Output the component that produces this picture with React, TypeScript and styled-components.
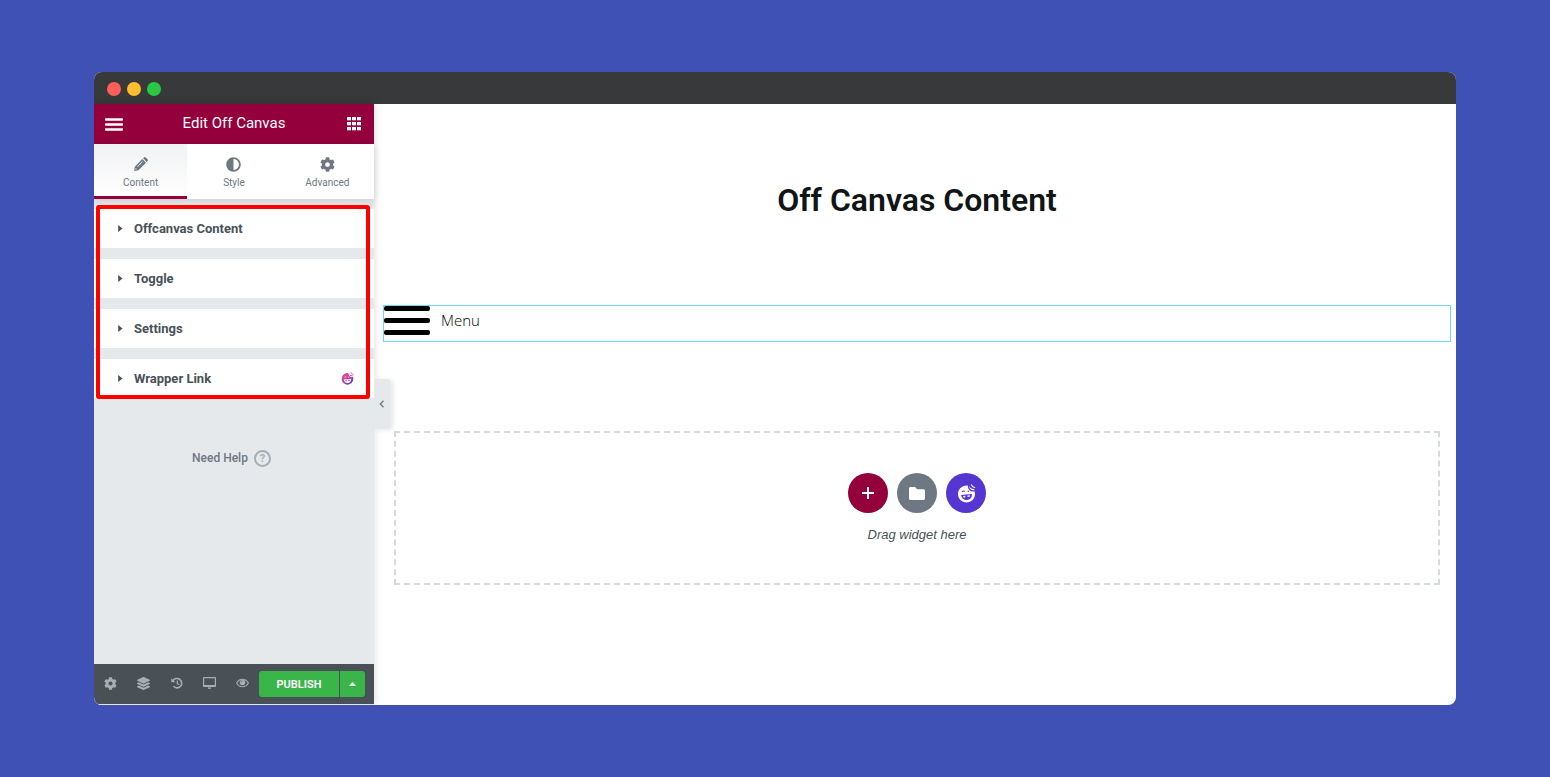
import React from "react";
import styled, { createGlobalStyle } from "styled-components";
import { FaAdjust, FaCog, FaLayerGroup } from "react-icons/fa";

const GlobalStyle = createGlobalStyle`
  * { box-sizing: border-box; }
  body { margin: 0; background: #3f51b5; font-family: Roboto, "Liberation Sans", sans-serif; }
  button { font-family: inherit; border: 0; padding: 0; margin: 0; background: none; cursor: pointer; color: inherit; }
  h1, h2, p { margin: 0; }
  svg { display: block; flex: none; }
`;

const Page = styled.div`
  min-height: 100vh;
  padding: 72px 94px;
  display: flex;
  flex-direction: column;
`;

const BrowserWindow = styled.div`
  flex: 1;
  display: flex;
  flex-direction: column;
  background: #fff;
  border-radius: 8px;
  overflow: hidden;
`;

const TitleBar = styled.div`
  display: flex;
  align-items: center;
  gap: 6px;
  height: 32px;
  padding: 2px 13px 0;
  background: #38393a;
`;

const Light = styled.span<{ $color: string }>`
  width: 14px;
  height: 14px;
  border-radius: 50%;
  background: ${(p) => p.$color};
`;

const Workspace = styled.div`
  flex: 1;
  display: flex;
`;

const Panel = styled.aside`
  position: relative;
  z-index: 1;
  flex: none;
  width: 280px;
  display: flex;
  flex-direction: column;
  background: #e6e9ec;
  border-bottom: 1px solid #e6e9ec;
  box-shadow: 0 0 8px rgba(0, 0, 0, 0.15);
`;

const PanelHeader = styled.header`
  display: flex;
  align-items: center;
  justify-content: space-between;
  height: 40px;
  padding: 0 13px 0 11px;
  background: #93003c;
  color: #fff;
`;

const PanelTitle = styled.h2`
  flex: 1;
  padding: 0 2px 2px 0;
  text-align: center;
  font-size: 15px;
  line-height: 20px;
  font-weight: 400;
`;

const Tabs = styled.div`
  display: grid;
  grid-template-columns: repeat(3, 1fr);
  height: 55px;
  background: #fff;
  box-shadow: 0 2px 8px rgba(0, 0, 0, 0.12);
`;

const Tab = styled.button<{ $active?: boolean }>`
  display: grid;
  grid-template-rows: 16px 12px;
  align-content: start;
  place-items: center;
  gap: 5px;
  padding-top: 12px;
  font-size: 10px;
  line-height: 12px;
  color: #6d7882;
  border-bottom: 3px solid ${(p) => (p.$active ? "#93003c" : "transparent")};
  background: ${(p) => (p.$active ? "linear-gradient(#f1f2f4, #fff)" : "#fff")};
`;

const Sections = styled.div`
  position: relative;
  display: flex;
  flex-direction: column;
  gap: 11px;
  padding-top: 10px;
`;

const SectionToggle = styled.button`
  display: flex;
  align-items: center;
  gap: 11px;
  height: 39px;
  padding: 0 20px 0 24px;
  background: #fff;
  color: #495157;
  font-size: 13px;
  font-weight: 700;
  text-align: left;

  span {
    flex: 1;
  }
`;

const Highlight = styled.div`
  position: absolute;
  inset: 6px 4px -1px 2px;
  border: 4px solid #f00;
  border-radius: 3px;
  pointer-events: none;
`;

const Help = styled.a`
  display: flex;
  align-items: center;
  align-self: center;
  gap: 6px;
  margin: 50px 5px 0 0;
  color: #6d7882;
  font-size: 12px;
  line-height: 20px;
  font-weight: 500;
  text-decoration: none;
`;

const HelpMark = styled.span`
  display: grid;
  place-items: center;
  width: 17px;
  height: 17px;
  border: 2px solid #a4afb7;
  border-radius: 50%;
  color: #a4afb7;
  font-size: 11px;
  line-height: 13px;
  font-weight: 700;
`;

const PanelFooter = styled.footer`
  display: flex;
  align-items: center;
  height: 40px;
  margin-top: auto;
  padding-right: 9px;
  background: #495157;
`;

const Tool = styled.button`
  display: grid;
  place-items: center;
  width: 33px;
  height: 40px;
  padding-bottom: 2px;
  color: #a4afb7;
`;

const PublishGroup = styled.div`
  display: flex;
  flex: 1;
  gap: 1px;
  height: 26px;
  border-radius: 3px;
  overflow: hidden;
  color: #fff;
`;

const Publish = styled.button`
  flex: 1;
  background: #39b54a;
  font-size: 11px;
  font-weight: 600;
`;

const PublishMore = styled.button`
  display: grid;
  place-items: center;
  width: 25px;
  background: #39b54a;
`;

const Collapse = styled.button`
  position: absolute;
  left: 100%;
  top: 275px;
  display: grid;
  place-items: center;
  width: 16px;
  height: 50px;
  border-radius: 0 3px 3px 0;
  background: #e6e9ec;
  color: #6d7882;
  box-shadow: 3px 1px 5px rgba(0, 0, 0, 0.1);
`;

const Canvas = styled.main`
  flex: 1;
  padding: 76px 5px 0 9px;
`;

const Heading = styled.h1`
  text-align: center;
  font-size: 32px;
  line-height: 40px;
  font-weight: 600;
  color: #111516;
`;

const Widget = styled.div`
  height: 37px;
  margin-top: 85px;
  border: 1px solid #71d7f7;
`;

const MenuButton = styled.button`
  display: flex;
  align-items: flex-start;
  gap: 11px;
  font-family: "Open Sans", sans-serif;
  font-size: 15px;
  line-height: 28px;
  font-weight: 300;
  color: #000;
`;

const DropZone = styled.section`
  display: flex;
  flex-direction: column;
  align-items: center;
  height: 154px;
  margin: 89px 11px 0;
  padding-top: 40px;
  border: 2px dashed #d5dadf;
`;

const Actions = styled.div`
  display: flex;
  gap: 9px;
`;

const RoundButton = styled.button<{ $color: string }>`
  display: grid;
  place-items: center;
  width: 40px;
  height: 40px;
  border-radius: 50%;
  color: #fff;
  background: ${(p) => p.$color};
`;

const Hint = styled.p`
  margin-top: 13px;
  font-family: "Liberation Sans", sans-serif;
  font-size: 13px;
  line-height: 18px;
  font-style: italic;
  color: #495157;
`;

function Face({ size, fill, detail }: { size: number; fill: string; detail: string }) {
  return (
    <svg width={size} height={size} viewBox="0 0 18 19" aria-hidden="true">
      <defs>
        <linearGradient id="face-gradient" gradientUnits="userSpaceOnUse" x1="2" y1="2" x2="16" y2="17">
          <stop offset="0.2" stopColor="#e2498a" />
          <stop offset="1" stopColor="#6a35d0" />
        </linearGradient>
      </defs>
      <path
        fill={fill}
        d="M10.300 1.500C5 .8.500 4.800.500 10c0 4.800 3.700 8.500 8.500 8.500s8.500-3.700 8.500-8.500c0-1-.1-1.800-.4-2.600-3.500 1-6.800-1.500-6.800-5.900z"
      />
      <path fill={fill} d="M11.300 1.800c.4 3.200 2.800 5.100 5.900 4.400-.2-.4-.5-.8-.8-1.100-2.200 0-3.900-1.100-5.100-3.300z" />
      <path fill="none" stroke={fill} strokeWidth="1.100" strokeLinecap="round" d="M14 .8c.4 1.500 1.500 2.500 3.200 2.700" />
      <path fill={detail} d="M3.500 10.900l10.900-1c.3 3-1.600 5.700-4.700 6-3.200.3-5.600-1.800-6.200-5z" />
      <path fill={fill} d="M5.500 11.900l2.200-.2.200 1.700-1.800.2zM10 11.500l2.600-.2c-.1.600-.3 1.100-.6 1.500l-1.900.2z" />
      <path fill="none" stroke={detail} strokeWidth="1.100" strokeLinecap="round" d="M4.800 7.700c.5-.7 1.300-.8 2-.4" />
      <circle cx="10.800" cy="7.200" r=".8" fill={detail} />
    </svg>
  );
}

const PencilIcon = () => (
  <svg width="14" height="14" viewBox="0 0 14 14" fill="currentColor">
    <path
      fillRule="evenodd"
      d="M8.300 2l3.700 3.700-7.600 7.600-4.200.6.600-4.200zM8.300 4.300L3.200 9.400l.5.500 5.100-5.100zM1.700 11l-.3 1.600 1.600-.3z"
    />
    <path d="M9.100 1.300l.8-.8a1.300 1.300 0 0 1 1.800 0l1.800 1.800a1.300 1.300 0 0 1 0 1.800l-.8.800z" />
  </svg>
);

const CaretRightIcon = () => (
  <svg width="5" height="7" viewBox="0 0 5 7" fill="currentColor">
    <path d="M.2 0l4.300 3.500L.2 7z" />
  </svg>
);

const CaretUpIcon = () => (
  <svg width="7" height="4" viewBox="0 0 7 4" fill="currentColor">
    <path d="M0 4l3.500-4L7 4z" />
  </svg>
);

const FolderIcon = () => (
  <svg width="16" height="13" viewBox="0 0 16 13" fill="currentColor">
    <path d="M1.500 0h4c.6 0 .9.200 1.200.6L8 2.200h6.500c.8 0 1.500.6 1.500 1.500v7.800c0 .8-.7 1.500-1.500 1.500h-13C.7 13 0 12.300 0 11.500v-10C0 .7.700 0 1.500 0z" />
  </svg>
);

const HamburgerIcon = () => (
  <svg width="18" height="13" viewBox="0 0 18 13" fill="currentColor">
    <rect y=".2" width="18" height="2.600" rx=".8" />
    <rect y="5.200" width="18" height="2.600" rx=".8" />
    <rect y="10.200" width="18" height="2.600" rx=".8" />
  </svg>
);

const GridIcon = () => (
  <svg width="14" height="14" viewBox="0 0 14 14" fill="currentColor">
    {[0, 5, 10].map((x) => [0, 5, 10].map((y) => <rect key={`${x}-${y}`} x={x} y={y} width="4" height="3.300" />))}
  </svg>
);

const HistoryIcon = () => (
  <svg width="12" height="12" viewBox="0 0 12 12" fill="none" stroke="currentColor" strokeWidth="1.600">
    <path d="M1.800 4A4.700 4.700 0 1 1 2.500 9.300" />
    <path d="M6.300 3.500v3l2 1.200" strokeWidth="1.300" />
    <path d="M.3 1.200v4h4z" fill="currentColor" stroke="none" />
  </svg>
);

const DesktopIcon = () => (
  <svg width="13" height="12" viewBox="0 0 13 12" fill="currentColor">
    <path fillRule="evenodd" d="M1 0h11a1 1 0 0 1 1 1v8a1 1 0 0 1-1 1H1a1 1 0 0 1-1-1V1a1 1 0 0 1 1-1zm.200 1.200v6.800h10.600V1.200z" />
    <path d="M5 10.500h3v1.300H5z" />
  </svg>
);

const EyeIcon = () => (
  <svg width="13" height="10" viewBox="0 0 13 10">
    <path d="M.6 5C2 2.500 4 1.200 6.500 1.200S11 2.500 12.400 5C11 7.500 9 8.800 6.500 8.800S2 7.500.6 5z" fill="none" stroke="currentColor" strokeWidth="1.100" />
    <circle cx="6.500" cy="4.500" r="2.800" fill="currentColor" />
    <path d="M5 4.300c.1-.8.700-1.300 1.500-1.300" fill="none" stroke="#495157" strokeWidth=".7" />
  </svg>
);

const MenuLinesIcon = () => (
  <svg width="46" height="30" viewBox="0 0 46 30" fill="#000">
    <rect y="0" width="46" height="5" rx="2" />
    <rect y="12" width="46" height="5" rx="2" />
    <rect y="24" width="46" height="5" rx="2" />
  </svg>
);

const ChevronIcon = () => (
  <svg width="6" height="8" viewBox="0 0 6 8" fill="none" stroke="currentColor" strokeWidth="1.300">
    <path d="M4.500 .8L1.300 4l3.200 3.200" />
  </svg>
);

const PlusIcon = () => (
  <svg width="12" height="12" viewBox="0 0 12 12" stroke="currentColor" strokeWidth="2">
    <path d="M6 0v12M0 6h12" />
  </svg>
);

const sections = ["Offcanvas Content", "Toggle", "Settings", "Wrapper Link"];

const tools = [
  { label: "Settings", icon: <FaCog size={13} /> },
  { label: "Navigator", icon: <FaLayerGroup size={13} /> },
  { label: "History", icon: <HistoryIcon /> },
  { label: "Responsive mode", icon: <DesktopIcon /> },
  { label: "Preview", icon: <EyeIcon /> },
];

export default function App() {
  return (
    <Page>
      <GlobalStyle />
      <BrowserWindow>
        <TitleBar>
          <Light $color="#ff5f57" />
          <Light $color="#febc2e" />
          <Light $color="#28c840" />
        </TitleBar>
        <Workspace>
          <Panel>
            <PanelHeader>
              <button aria-label="Menu"><HamburgerIcon /></button>
              <PanelTitle>Edit Off Canvas</PanelTitle>
              <button aria-label="Widgets"><GridIcon /></button>
            </PanelHeader>
            <Tabs>
              <Tab $active><PencilIcon />Content</Tab>
              <Tab><FaAdjust size={15} />Style</Tab>
              <Tab><FaCog size={15} />Advanced</Tab>
            </Tabs>
            <Sections>
              {sections.map((name) => (
                <SectionToggle key={name}>
                  <CaretRightIcon />
                  <span>{name}</span>
                  {name === "Wrapper Link" && <Face size={13} fill="url(#face-gradient)" detail="#fff" />}
                </SectionToggle>
              ))}
              <Highlight />
            </Sections>
            <Help href="#help">
              Need Help <HelpMark>?</HelpMark>
            </Help>
            <PanelFooter>
              {tools.map((tool) => (
                <Tool key={tool.label} aria-label={tool.label}>{tool.icon}</Tool>
              ))}
              <PublishGroup>
                <Publish>PUBLISH</Publish>
                <PublishMore aria-label="Save options"><CaretUpIcon /></PublishMore>
              </PublishGroup>
            </PanelFooter>
            <Collapse aria-label="Collapse panel"><ChevronIcon /></Collapse>
          </Panel>
          <Canvas>
            <Heading>Off Canvas Content</Heading>
            <Widget>
              <MenuButton><MenuLinesIcon />Menu</MenuButton>
            </Widget>
            <DropZone>
              <Actions>
                <RoundButton $color="#93003c" aria-label="Add section"><PlusIcon /></RoundButton>
                <RoundButton $color="#6d7882" aria-label="Add template"><FolderIcon /></RoundButton>
                <RoundButton $color="#5636d1" aria-label="Happy Addons"><Face size={19} fill="#fff" detail="#5636d1" /></RoundButton>
              </Actions>
              <Hint>Drag widget here</Hint>
            </DropZone>
          </Canvas>
        </Workspace>
      </BrowserWindow>
    </Page>
  );
}
